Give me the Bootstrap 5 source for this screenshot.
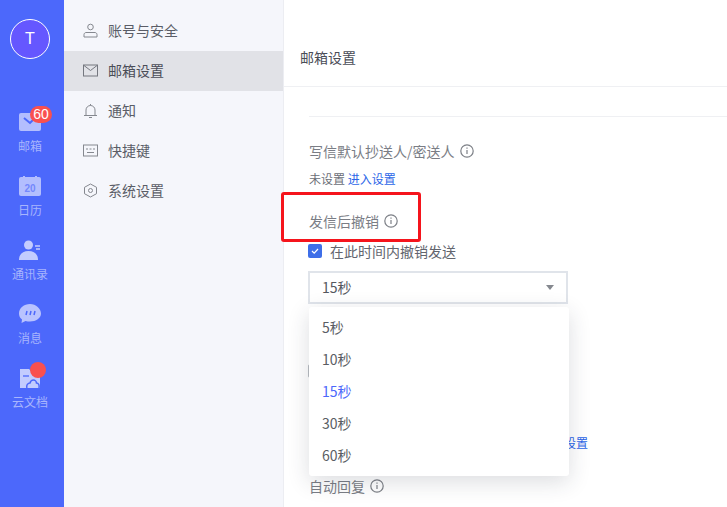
<!DOCTYPE html>
<html lang="zh">
<head>
<meta charset="utf-8">
<title>邮箱设置</title>
<link href="https://cdn.jsdelivr.net/npm/bootstrap@5.3.0/dist/css/bootstrap.min.css" rel="stylesheet">
<style>
html,body{height:507px;overflow:hidden;margin:0}
body{font-family:"Noto Sans CJK SC","Liberation Sans",sans-serif;font-size:13px;color:#4b4e58;background:#fff}
.shell{width:727px;height:507px;overflow:hidden}
.rail{width:64px;background:#4c68fb;flex:none}
.avatar{width:40px;height:40px;margin:19px 0 0 10px;border:1.5px solid #fff;border-radius:50%;background:#6557ff;color:#fff;font:16px/37px "Liberation Sans",sans-serif;text-align:center}
.railitem{position:relative;width:60px;height:64px;color:#a8b5fd;font-size:12px;line-height:16px;text-align:center}
.railitem svg{display:block;margin:0 auto 6px}
.rail-stack{margin-top:53px}
.redcount{position:absolute;top:-6px;left:30px;height:17px;min-width:22px;border-radius:9px;background:#f9504f;color:#fff;font:14px/17px "Liberation Sans",sans-serif}
.reddot{position:absolute;top:-6px;left:30px;width:16px;height:16px;border-radius:50%;background:#f9504f}
.side{width:220px;background:#f5f6fb;border-right:1px solid #ecedf2;flex:none;padding-top:11px}
.sideitem{height:40px;padding:0 0 2px 19px;gap:10px;color:#5a5d67;font-size:14px}
.sideitem.picked{background:#e1e2e7;color:#4a4d57}
.main{position:relative;flex:1;min-width:0}
.head{height:87px;padding:47px 0 0 16px;font-size:14px;line-height:20px;color:#4a4d57;border-bottom:1px solid #eff0f3}
.inner{height:30px;margin-left:25px;border-bottom:1px solid #eff0f3}
.block{padding-left:25px}
.lbl{font-size:14px;line-height:20px;color:#7a7d85;gap:5px}
.line1{margin-top:24px}
.line2{margin-top:9px;font-size:12px;line-height:18px;color:#6b6e77}
.bluelink{color:#2c66e8;text-decoration:none}
.line3{margin-top:23px}
.line4{margin:10px 0 0 -1px;gap:8px;font-size:14px;line-height:20px;color:#62656e}
.tick{width:14px;height:14px;border-radius:2px;background:#3e6ee8;flex:none}
.pick{margin:10px 0 0 -1px;width:260px;height:33px;border:2px solid #e0e4ea;padding:0 12px;font-size:14px;color:#55585f}
.caret{width:0;height:0;border-left:4.5px solid transparent;border-right:4.5px solid transparent;border-top:5px solid #85888f}
.auto{position:absolute;left:25px;top:476px}
.peek{position:absolute;left:256px;top:434px;font-size:12px;line-height:18px}
.under-box{position:absolute;left:24px;top:364px;width:14px;height:14px;border:1px solid #b9bcc2;border-radius:2px}
.menu-pop{position:absolute;left:25px;top:307px;width:260px;height:169px;background:#fff;border-radius:3px;padding:4px 0;box-shadow:0 6px 22px rgba(40,45,60,.16)}
.opt{height:32px;line-height:32px;padding-left:13px;font-size:14px;color:#5a5d64}
.opt.now{color:#4c68fb}
.redbox{position:absolute;left:-3px;top:192px;width:140px;height:50px;border:3px solid #f5141c;border-radius:3px}
</style>
</head>
<body>
<div class="shell d-flex">
  <nav class="rail d-flex flex-column">
    <div class="avatar">T</div>
    <div class="rail-stack">
      <div class="railitem">
        <svg width="22" height="20" viewBox="0 0 22 20"><rect y="1" width="22" height="18" rx="2" fill="#b3befe"/><path d="M5 6l6 5 6-6" fill="none" stroke="#4c68fb" stroke-width="2"/></svg>
        邮箱<span class="redcount">60</span>
      </div>
      <div class="railitem">
        <svg width="22" height="20" viewBox="0 0 22 20"><rect y="1" width="22" height="19" rx="2" fill="#b3befe"/><rect x="4" y="0" width="2" height="3" fill="#b3befe"/><rect x="16" y="0" width="2" height="3" fill="#b3befe"/><text x="11" y="15.500" text-anchor="middle" font-size="10" font-weight="700" font-family="Liberation Sans" fill="#7488fc">20</text></svg>
        日历
      </div>
      <div class="railitem">
        <svg width="22" height="20" viewBox="0 0 22 20"><circle cx="9.500" cy="5" r="4.500" fill="#c3ccfe"/><path d="M0 20c0-6 4-9 9.500-9S19 14 19 20z" fill="#c3ccfe"/><path d="M16 6h5M17 9h4" stroke="#c3ccfe" stroke-width="1.300"/></svg>
        通讯录
      </div>
      <div class="railitem">
        <svg width="22" height="20" viewBox="0 0 22 20"><path d="M11 0C5 0 0 4 0 9.500c0 2.500 1 4.500 3 6l-.5 3.500 4-2c1.400.4 3 .5 4.500.5 6 0 11-3.500 11-8S17 0 11 0z" fill="#b9c3fe"/><path d="M7 11l1-4M11 11l1-4M15 11l1-4" stroke="#4c68fb" stroke-width="1.500"/></svg>
        消息
      </div>
      <div class="railitem">
        <svg width="22" height="20" viewBox="0 0 22 20"><path d="M1 1h9l3 3h8v16H1z" fill="#c3ccfe"/><path d="M4 8h6" stroke="#4c68fb" stroke-width="1.300"/><path d="M8 20c-1-3 1-5 3-5 .5-2 2-3 3.500-3s3 1.500 3 3c2 0 3 2 2.500 5" fill="none" stroke="#4c68fb" stroke-width="1.500"/></svg>
        云文档<span class="reddot"></span>
      </div>
    </div>
  </nav>
  <aside class="side">
    <div class="sideitem d-flex align-items-center">
      <svg width="15" height="15" viewBox="0 0 15 15" fill="none" stroke="#85888f"><circle cx="7.500" cy="4" r="2.800"/><path d="M1 14v-2.500c0-1 1-2 2-2h9c1 0 2 1 2 2V14z"/></svg>账号与安全
    </div>
    <div class="sideitem picked d-flex align-items-center">
      <svg width="15" height="15" viewBox="0 0 15 15" fill="none" stroke="#74777f"><rect x=".5" y="2" width="14" height="11"/><path d="M1 2.500l6.500 5 6.500-5"/></svg>邮箱设置
    </div>
    <div class="sideitem d-flex align-items-center">
      <svg width="15" height="15" viewBox="0 0 15 15" fill="none" stroke="#85888f"><path d="M1 12.500h13M3 12.500V7a4.500 4.500 0 0 1 9 0v5.500M6 14.500h3M7.500 1v1.500"/></svg>通知
    </div>
    <div class="sideitem d-flex align-items-center">
      <svg width="15" height="15" viewBox="0 0 15 15" fill="none" stroke="#85888f"><rect x=".5" y="2" width="14" height="11"/><path d="M3 6h2M6.500 6h2M10 6h2M4 9.500h7"/></svg>快捷键
    </div>
    <div class="sideitem d-flex align-items-center">
      <svg width="15" height="15" viewBox="0 0 15 15" fill="none" stroke="#85888f"><path d="M7.500 1l6 3.300v6.400l-6 3.300-6-3.300V4.300z"/><circle cx="7.500" cy="7.500" r="2"/></svg>系统设置
    </div>
  </aside>
  <main class="main">
    <div class="head">邮箱设置</div>
    <div class="inner"></div>
    <div class="block">
      <div class="lbl line1 d-flex align-items-center">写信默认抄送人/密送人
        <svg width="14" height="14" viewBox="0 0 14 14" fill="none" stroke="#7d8087" stroke-width="1.200"><circle cx="7" cy="7" r="6.200"/><path d="M7 6v4M7 3.500v1.200"/></svg>
      </div>
      <div class="line2">未设置 <a class="bluelink" href="#">进入设置</a></div>
      <div class="lbl line3 d-flex align-items-center">发信后撤销
        <svg width="14" height="14" viewBox="0 0 14 14" fill="none" stroke="#7d8087" stroke-width="1.200"><circle cx="7" cy="7" r="6.200"/><path d="M7 6v4M7 3.500v1.200"/></svg>
      </div>
      <div class="line4 d-flex align-items-center">
        <span class="tick d-flex align-items-center justify-content-center"><svg width="10" height="10" viewBox="0 0 10 10" fill="none" stroke="#fff" stroke-width="1.200"><path d="M2 5l2.200 2.200L8 3"/></svg></span>在此时间内撤销发送
      </div>
      <div class="pick d-flex align-items-center justify-content-between">15秒<span class="caret"></span></div>
    </div>
    <span class="under-box"></span>
    <a class="peek bluelink" href="#">进入设置</a>
    <div class="lbl auto d-flex align-items-center">自动回复
      <svg width="14" height="14" viewBox="0 0 14 14" fill="none" stroke="#7d8087" stroke-width="1.200"><circle cx="7" cy="7" r="6.200"/><path d="M7 6v4M7 3.500v1.200"/></svg>
    </div>
    <div class="menu-pop">
      <div class="opt">5秒</div>
      <div class="opt">10秒</div>
      <div class="opt now">15秒</div>
      <div class="opt">30秒</div>
      <div class="opt">60秒</div>
    </div>
    <div class="redbox"></div>
  </main>
</div>
<script src="https://cdn.jsdelivr.net/npm/bootstrap@5.3.0/dist/js/bootstrap.bundle.min.js"></script>
</body>
</html>
